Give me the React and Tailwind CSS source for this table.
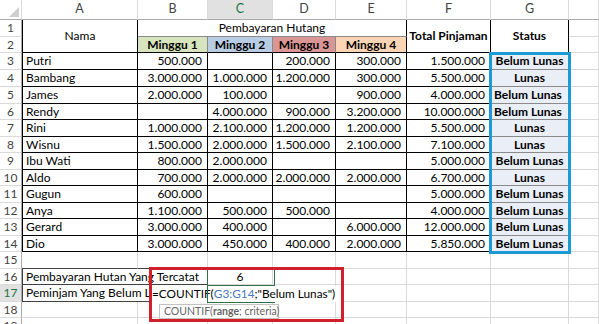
import clsx from 'clsx';

const rows = [
  ['Putri', '500.000', '', '200.000', '300.000', '1.500.000', 'Belum Lunas'],
  ['Bambang', '3.000.000', '1.000.000', '1.200.000', '300.000', '5.500.000', 'Lunas'],
  ['James', '2.000.000', '100.000', '', '900.000', '4.000.000', 'Belum Lunas', true],
  ['Rendy', '', '4.000.000', '900.000', '3.200.000', '10.000.000', 'Belum Lunas', true],
  ['Rini', '1.000.000', '2.100.000', '1.200.000', '1.200.000', '5.500.000', 'Lunas'],
  ['Wisnu', '1.500.000', '2.000.000', '1.500.000', '2.100.000', '7.100.000', 'Lunas'],
  ['Ibu Wati', '800.000', '2.000.000', '', '', '5.000.000', 'Belum Lunas'],
  ['Aldo', '700.000', '2.000.000', '2.000.000', '2.000.000', '6.700.000', 'Lunas'],
  ['Gugun', '600.000', '', '', '', '5.000.000', 'Belum Lunas'],
  ['Anya', '1.100.000', '500.000', '500.000', '', '4.000.000', 'Belum Lunas'],
  ['Gerard', '3.000.000', '400.000', '', '6.000.000', '12.000.000', 'Belum Lunas'],
  ['Dio', '3.000.000', '450.000', '400.000', '2.000.000', '5.850.000', 'Belum Lunas'],
];

const cell = 'flex items-center whitespace-nowrap overflow-hidden leading-none';
const gridLine = 'border-r border-b border-[#dadada]';
const tableLine = 'border-r border-b border-black';
const rowHead = 'flex items-center justify-center border-r border-b border-r-[#ababab] border-b-[#dadada] text-[#444] leading-none';

function RowNum({ n, active }) {
  return (
    <div className={clsx(rowHead, active && 'bg-[#e1e1e1] text-[#217346]')}>{n}</div>
  );
}

function Blank({ count }) {
  return Array.from({ length: count }).map((_, i) => <div key={i} className={gridLine} />);
}

export default function App() {
  return (
    <div className="relative h-[324px] w-[599px] overflow-hidden bg-white font-['Lato',sans-serif] text-[12px] text-black">
      <div className="grid grid-cols-[22px_116px_70px_65px_63px_71px_84px_78px_1fr] grid-rows-[20px_17px_16px_17px_17px_17px_16px_17px_16px_17px_16px_17px_16px_17px_16px_17px_16px_17px_16px_17px]">
        {/* column headers */}
        <div className="relative border-r border-b border-r-[#dadada] border-b-[#ababab]">
          <svg className="absolute right-[2px] bottom-[2px]" width="10" height="10" viewBox="0 0 10 10">
            <polygon points="10,0 10,10 0,10" fill="#cfcfcf" />
          </svg>
        </div>
        {['A', 'B', 'C', 'D', 'E', 'F', 'G', 'H'].map((l) => (
          <div
            key={l}
            className={clsx(
              'flex items-center justify-center border-r border-b border-r-[#dadada] border-b-[#ababab] text-[12.5px] leading-none',
              l === 'C' ? 'bg-[#e1e1e1] text-[#217346]' : 'text-[#444]'
            )}
          >
            {l === 'H' ? '' : l}
          </div>
        ))}

        {/* row 1 */}
        <RowNum n={1} />
        <div className={clsx(cell, tableLine, 'row-span-2 justify-center border-l border-l-black')}>Nama</div>
        <div className={clsx(cell, 'col-span-4 justify-center border-r border-b border-r-black border-b-[#8a8a8a]')}>
          Pembayaran Hutang
        </div>
        <div className={clsx(cell, tableLine, 'row-span-2 justify-center font-bold')}>Total Pinjaman</div>
        <div className={clsx(cell, tableLine, 'row-span-2 justify-center font-bold')}>Status</div>
        <div className={gridLine} />

        {/* row 2 */}
        <RowNum n={2} />
        <div className={clsx(cell, 'justify-center font-bold bg-[#d7e4bd] border-r border-b border-r-[#8a8a8a] border-b-black')}>Minggu 1</div>
        <div className={clsx(cell, 'justify-center font-bold bg-[#b8cce4] border-r border-b border-r-[#8a8a8a] border-b-black')}>Minggu 2</div>
        <div className={clsx(cell, 'justify-center font-bold bg-[#da9694] border-r border-b border-r-[#8a8a8a] border-b-black')}>Minggu 3</div>
        <div className={clsx(cell, tableLine, 'justify-center font-bold bg-[#fcd5b4]')}>Minggu 4</div>
        <div className={gridLine} />

        {/* data rows */}
        {rows.map((r, i) => (
          <div key={i} className="contents">
            <RowNum n={i + 3} />
            <div className={clsx(cell, tableLine, 'border-l border-l-black pl-[3px]')}>{r[0]}</div>
            {r.slice(1, 6).map((v, j) => (
              <div key={j} className={clsx(cell, tableLine, 'justify-end pr-[5px]')}>{v}</div>
            ))}
            <div
              className={clsx(
                cell,
                'bg-[#e9eef7] font-bold border-r border-b border-r-black border-b-[#8a8a8a]',
                r[7] ? 'justify-start pl-[3px]' : 'justify-center'
              )}
            >
              {r[6]}
            </div>
            <div className={gridLine} />
          </div>
        ))}

        {/* row 15 */}
        <RowNum n={15} />
        <div className="border-r border-b border-r-[#dadada] border-b-[#404040]" />
        <div className="border-r border-b border-r-[#dadada] border-b-[#404040]" />
        <Blank count={6} />

        {/* row 16 */}
        <RowNum n={16} />
        <div className={clsx(cell, 'overflow-visible relative z-10 border-l border-b border-l-[#404040] border-b-[#404040] pl-[3px]')}>
          Pembayaran Hutan Yang Tercatat
        </div>
        <div className="border-b border-b-[#404040]" />
        <div className={clsx(cell, gridLine, 'justify-center')}>6</div>
        <Blank count={5} />

        {/* row 17 */}
        <RowNum n={17} active />
        <div className={clsx(cell, 'overflow-visible relative z-10 border-l border-b border-l-[#404040] border-b-[#404040] pl-[3px]')}>
          <span className="block w-[123px] shrink-0 overflow-hidden">Peminjam Yang Belum Lunas</span>
        </div>
        <div className="border-b border-b-[#404040]" />
        <Blank count={6} />

        {/* rows 18, 19 */}
        <RowNum n={18} />
        <Blank count={8} />
        <RowNum n={19} />
        <Blank count={8} />
      </div>

      {/* formula being edited */}
      <div className="absolute left-[150px] top-[286px] z-20 flex h-[16px] w-[192px] items-center whitespace-nowrap bg-white pl-[2px] text-[11.8px] leading-none">
        =COUNTIF(<span className="text-[#4a78c2]">G3:G14</span>;"Belum Lunas")
      </div>

      {/* selected cell outline C16 / C17 */}
      <div className="absolute left-[207px] top-[268px] z-30 h-[18px] w-[68px] border border-[#2f6f4a]" />
      <div className="absolute left-[207px] top-[285px] z-30 h-[18px] w-[68px] border-l border-b border-[#2f6f4a]" />

      {/* tooltip */}
      <div className="absolute left-[159px] top-[304px] z-30 flex h-[15px] w-[120px] items-center whitespace-nowrap border border-[#c3c3c3] bg-white pl-[4px] text-[10.5px] leading-none text-[#666]">
        COUNTIF(<span className="font-bold">range</span>; criteria)
      </div>

      {/* highlight boxes */}
      <div className="absolute left-[489px] top-[52px] z-30 h-[202px] w-[82px] border-[3px] border-[#1c9ad6]" />
      <div className="absolute left-[149px] top-[267px] z-40 h-[55px] w-[195px] border-[3px] border-[#d1202b]" />
    </div>
  );
}
